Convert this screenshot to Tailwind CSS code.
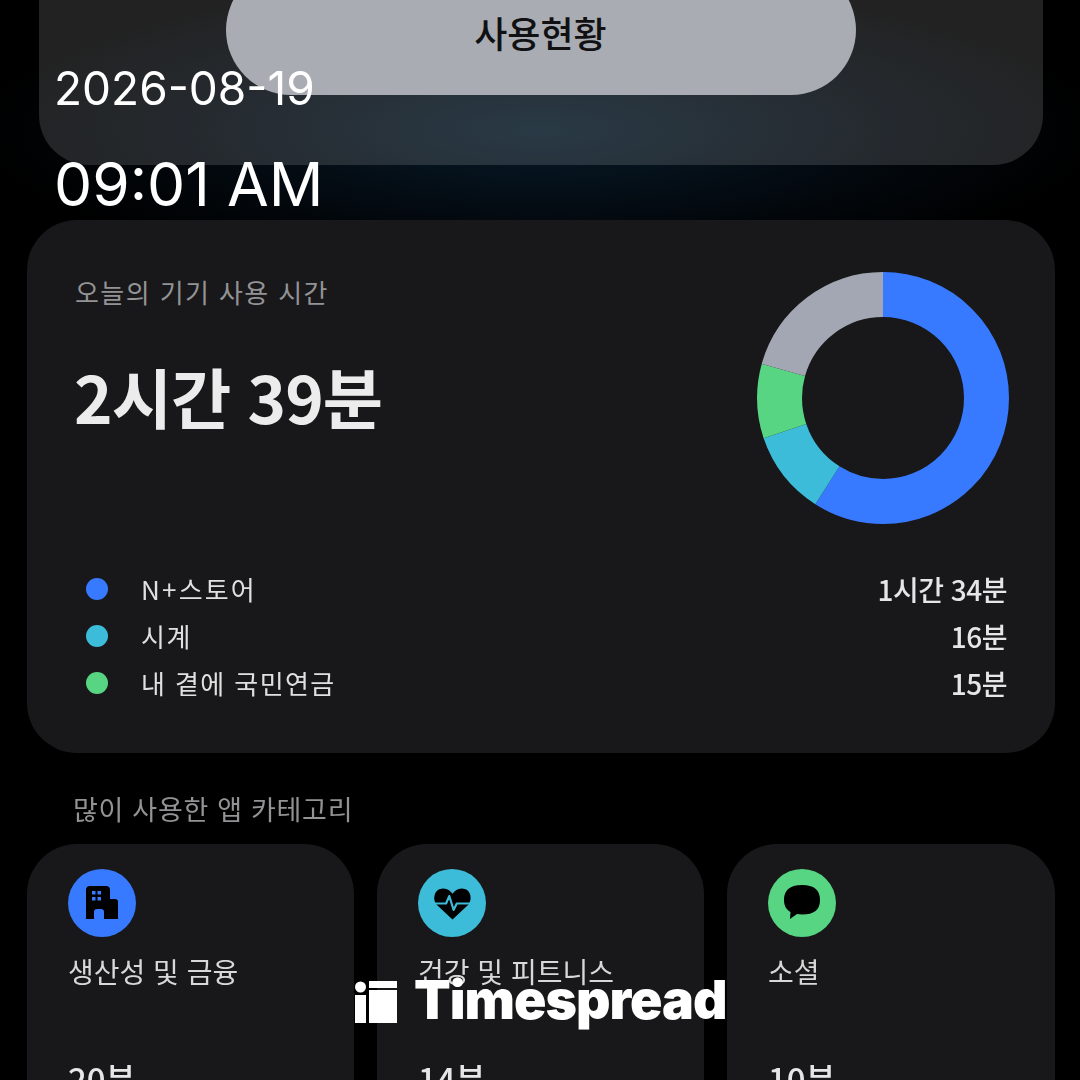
<!DOCTYPE html>
<html lang="ko">
<head>
  <meta charset="UTF-8" />
  <meta name="viewport" content="width=device-width, initial-scale=1.0" />
  <title>사용현황</title>
  <script src="https://cdn.jsdelivr.net/npm/@tailwindcss/browser@4"></script>
</head>
<body class="bg-black">
  <div class="relative w-[1080px] h-[1080px] overflow-hidden bg-black font-['Noto_Sans_CJK_KR','Noto_Sans',sans-serif]">

    <div class="blur-[0.7px]">
      <!-- top summary card, cut off by the screen edge -->
      <section class="h-[220px] pl-[39px] pr-[37px] bg-[radial-gradient(ellipse_560px_150px_at_540px_130px,#081b29_0%,#03090f_60%,#000000_100%)]">
        <div class="h-[165px] rounded-b-[50px] bg-white/[0.135] flex justify-center overflow-hidden">
          <div class="mt-[-35px] ml-[-1px] w-[630px] h-[130px] rounded-[65px] bg-[#a9acb2] flex items-center justify-center">
            <span class="pt-[4px] text-[36px] font-medium text-[#111113]">사용현황</span>
          </div>
        </div>
      </section>

      <!-- today's usage -->
      <section class="ml-[27px] mr-[25px] h-[533px] rounded-[50px] bg-[#18181a] pl-[48px] pr-[46px] pt-[52px]">
        <div class="flex justify-between h-[293px]">
          <div>
            <p class="text-[26px] leading-[40px] text-[#939395] tracking-[1.4px]">오늘의 기기 사용 시간</p>
            <p class="-ml-[1px] mt-[44px] text-[65.500px] leading-[80px] font-semibold text-[#ececec] tracking-[-1px]">2시간 39분</p>
          </div>
          <svg class="shrink-0" width="252" height="252" viewBox="0 0 252 252" fill="none">
            <g transform="rotate(-90 126 126)" stroke-width="45">
              <circle cx="126" cy="126" r="103.5" pathLength="360" stroke="#387aff" stroke-dasharray="212.5 360" />
              <circle cx="126" cy="126" r="103.5" pathLength="360" stroke="#3cbcd8" stroke-dasharray="38.8 360" stroke-dashoffset="-212.5" />
              <circle cx="126" cy="126" r="103.5" pathLength="360" stroke="#58d583" stroke-dasharray="34.4 360" stroke-dashoffset="-251.3" />
              <circle cx="126" cy="126" r="103.5" pathLength="360" stroke="#a3a7b3" stroke-dasharray="74.3 360" stroke-dashoffset="-285.7" />
            </g>
          </svg>
        </div>
        <ul class="pl-[11px] pr-[2px]">
          <li class="flex items-center h-[47px]">
            <span class="w-[22px] h-[22px] rounded-full bg-[#387aff]"></span>
            <span class="ml-[33px] flex-1 text-[26px] text-[#e0e0e0] tracking-[2.2px]">N+스토어</span>
            <span class="text-[28px] font-medium text-[#e6e6e6] tracking-[-0.5px]">1시간 34분</span>
          </li>
          <li class="flex items-center h-[47px]">
            <span class="w-[22px] h-[22px] rounded-full bg-[#3cbcd8]"></span>
            <span class="ml-[33px] flex-1 text-[26px] text-[#e0e0e0] tracking-[1.5px]">시계</span>
            <span class="text-[28px] font-medium text-[#e6e6e6] tracking-[-0.5px]">16분</span>
          </li>
          <li class="flex items-center h-[47px]">
            <span class="w-[22px] h-[22px] rounded-full bg-[#58d583]"></span>
            <span class="ml-[33px] flex-1 text-[26px] text-[#e0e0e0] tracking-[1.4px]">내 곁에 국민연금</span>
            <span class="text-[28px] font-medium text-[#e6e6e6] tracking-[-0.5px]">15분</span>
          </li>
        </ul>
      </section>

      <!-- top categories -->
      <h2 class="mt-[36px] ml-[73px] h-[55px] text-[27px] leading-[40px] text-[#939395] tracking-[0.7px]">많이 사용한 앱 카테고리</h2>
      <div class="ml-[27px] mr-[25px] grid grid-cols-[327px_327px_328px] gap-[23px]">
        <article class="h-[300px] rounded-[50px] bg-[#18181a] pl-[41px] pt-[25px]">
          <div class="w-[68px] h-[68px] rounded-full bg-[#387aff] flex items-center justify-center">
            <svg width="36" height="36" viewBox="0 0 36 36">
              <path fill="#000" fill-rule="evenodd" d="M2 5a4 4 0 0 1 4-4h16a4 4 0 0 1 4 4v9h5a3 3 0 0 1 3 3v17H20v-7a3 3 0 0 0-3-3h-4a3 3 0 0 0-3 3v7H2zM8 6v3.500h3.500V6zm5.500 0v3.500H17V6zM8 12v3.500h3.500V12zm5.500 0v3.500H17V12z"/>
            </svg>
          </div>
          <p class="mt-[12px] text-[28px] leading-[44px] text-[#d8d8d8]">생산성 및 금융</p>
          <p class="mt-[63px] text-[33px] leading-[44px] font-medium text-[#e6e6e6]">20분</p>
        </article>
        <article class="h-[300px] rounded-[50px] bg-[#18181a] pl-[41px] pt-[25px]">
          <div class="w-[68px] h-[68px] rounded-full bg-[#3cbcd8] flex items-center justify-center">
            <svg width="45" height="45" viewBox="0 0 42 42" fill="none">
              <path fill="#000" d="M21 36 6.500 22.500C2 17.500 3.500 7 12.500 7c3.800 0 6.500 2 8.500 5 2-3 4.700-5 8.500-5 9 0 10.500 10.500 6 15.500z"/>
              <path stroke="#3cbcd8" stroke-width="2" stroke-linejoin="round" stroke-linecap="round" d="M2 21h13l3-7 4 13 3-6h15"/>
            </svg>
          </div>
          <p class="mt-[12px] text-[28px] leading-[44px] text-[#d8d8d8]">건강 및 피트니스</p>
          <p class="mt-[63px] text-[33px] leading-[44px] font-medium text-[#e6e6e6]">14분</p>
        </article>
        <article class="h-[300px] rounded-[50px] bg-[#18181a] pl-[41px] pt-[25px]">
          <div class="w-[68px] h-[68px] rounded-full bg-[#58d583] flex items-center justify-center">
            <svg width="40" height="40" viewBox="0 0 40 40">
              <path fill="#000" d="M20 2c12 0 18 5 18 15s-6 14.500-18 14.500c-2 0-3.500-.2-5-.5L8 36l.5-7C4 26.500 2 22.500 2 17 2 7 8 2 20 2z"/>
            </svg>
          </div>
          <p class="mt-[12px] text-[28px] leading-[44px] text-[#d8d8d8]">소셜</p>
          <p class="mt-[63px] text-[33px] leading-[44px] font-medium text-[#e6e6e6]">10분</p>
        </article>
      </div>
    </div>

    <!-- date stamp over the screenshot -->
    <div class="absolute left-[54px] top-[61px] text-white font-['Inter',sans-serif]">
      <p class="text-[46px] leading-[54px]">2026-08-19</p>
      <p class="mt-[33px] text-[60.500px] leading-[72px]">09:01 AM</p>
    </div>

    <!-- watermark -->
    <div class="absolute left-[355px] top-[970px] flex items-center text-white">
      <svg class="mt-[3px]" width="42" height="42" viewBox="0 0 42 42" fill="#fff">
        <circle cx="5.500" cy="6" r="5.500" />
        <rect x="0" y="14" width="11" height="28" />
        <rect x="14" y="0" width="28" height="7" />
        <rect x="14" y="9" width="28" height="33" />
      </svg>
      <span class="ml-[17px] text-[53.500px] leading-[60px] font-black tracking-[-1px] font-['Inter',sans-serif]">Timespread</span>
    </div>
  </div>
</body>
</html>
